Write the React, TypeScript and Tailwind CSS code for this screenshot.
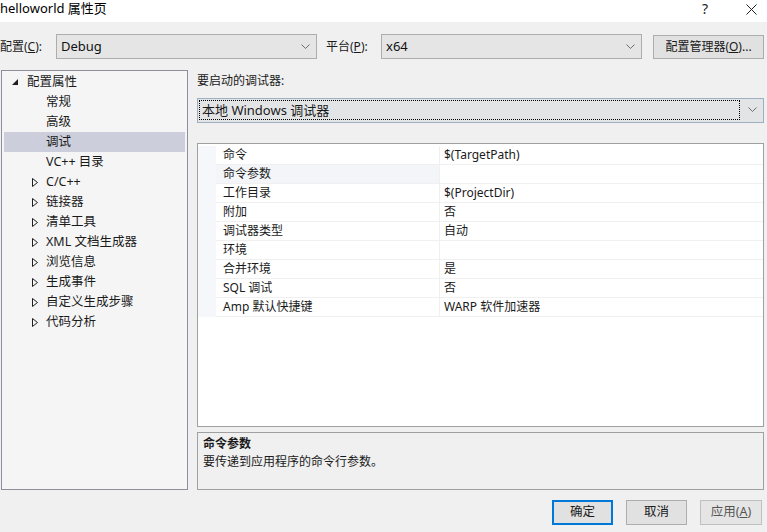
import { Fragment } from "react";

const font = "font-['Microsoft_YaHei_UI','Noto_Sans','Noto_Sans_CJK_SC',sans-serif]";

const treeItems: { label: string; level: 0 | 1; arrow?: "open" | "closed"; selected?: boolean }[] = [
  { label: "配置属性", level: 0, arrow: "open" },
  { label: "常规", level: 1 },
  { label: "高级", level: 1 },
  { label: "调试", level: 1, selected: true },
  { label: "VC++ 目录", level: 1 },
  { label: "C/C++", level: 1, arrow: "closed" },
  { label: "链接器", level: 1, arrow: "closed" },
  { label: "清单工具", level: 1, arrow: "closed" },
  { label: "XML 文档生成器", level: 1, arrow: "closed" },
  { label: "浏览信息", level: 1, arrow: "closed" },
  { label: "生成事件", level: 1, arrow: "closed" },
  { label: "自定义生成步骤", level: 1, arrow: "closed" },
  { label: "代码分析", level: 1, arrow: "closed" },
];

const props: [string, string][] = [
  ["命令", "$(TargetPath)"],
  ["命令参数", ""],
  ["工作目录", "$(ProjectDir)"],
  ["附加", "否"],
  ["调试器类型", "自动"],
  ["环境", ""],
  ["合并环境", "是"],
  ["SQL 调试", "否"],
  ["Amp 默认快捷键", "WARP 软件加速器"],
];

function Chevron({ className = "" }: { className?: string }) {
  return (
    <svg width="9" height="6" viewBox="0 0 9 6" className={className}>
      <polyline points="0.5,0.5 4.5,4.5 8.5,0.5" fill="none" stroke="#6d6d6d" strokeWidth="1" />
    </svg>
  );
}

function Combo({ value, className }: { value: string; className: string }) {
  return (
    <div className={`flex items-center justify-between border border-[#adadad] bg-[#e5e5e5] pl-[4px] pr-[6px] ${className}`}>
      <span className="text-[13px] text-[#111]">{value}</span>
      <Chevron />
    </div>
  );
}

export default function App() {
  return (
    <div className={`flex h-[532px] w-[767px] flex-col overflow-hidden bg-[#f0f0f0] text-[12px] text-[#1a1a1a] ${font}`}>
      {/* 标题栏 */}
      <div className="flex h-[22px] items-start justify-between bg-white pt-[1px]">
        <span className="text-[13px] leading-[14px] text-black">helloworld 属性页</span>
        <div className="flex items-center pt-[1px]">
          <span className="mr-[38px] text-[14px] leading-[14px] text-[#222]">?</span>
          <svg width="11" height="11" viewBox="0 0 11 11" className="mr-[10px]">
            <path d="M0.5 0.5 L10.5 10.5 M10.5 0.5 L0.5 10.5" stroke="#222" strokeWidth="1" />
          </svg>
        </div>
      </div>

      {/* 配置行 */}
      <div className="mt-[12px] flex h-[25px] items-center">
        <span className="w-[56px] text-[12px]">
          配置(<span className="underline">C</span>):
        </span>
        <Combo value="Debug" className="h-[25px] w-[261px]" />
        <span className="ml-[9px] w-[55px] text-[12px]">
          平台(<span className="underline">P</span>):
        </span>
        <Combo value="x64" className="h-[25px] w-[261px]" />
        <button className="ml-[11px] flex h-[24px] w-[111px] items-center justify-center border border-[#adadad] bg-[#e1e1e1] text-[12px]">
          配置管理器(<span className="underline">O</span>)...
        </button>
      </div>

      {/* 主体 */}
      <div className="mt-[11px] flex h-[420px]">
        {/* 左侧树 */}
        <div className="ml-[1px] w-[187px] border border-[#8e8f9c] bg-[#f5f5f5] pt-[1px]">
          {treeItems.map((it) => (
            <div
              key={it.label}
              className={`mx-[2px] flex h-[20px] items-center ${it.selected ? "bg-[#cccedb]" : ""}`}
            >
              <span className={`flex w-[8px] justify-center ${it.level === 0 ? "ml-[7px]" : "ml-[27px]"}`}>
                {it.arrow === "open" && (
                  <svg width="6" height="6" viewBox="0 0 6 6">
                    <polygon points="6,0 6,6 0,6" fill="#1e1e1e" />
                  </svg>
                )}
                {it.arrow === "closed" && (
                  <svg width="6" height="9" viewBox="0 0 6 9">
                    <polygon points="0.5,0.5 5.5,4.5 0.5,8.5" fill="none" stroke="#1e1e1e" strokeWidth="1" />
                  </svg>
                )}
              </span>
              <span className={`text-[12.5px] ${it.level === 0 ? "ml-[8px]" : "ml-[7px]"}`}>{it.label}</span>
            </div>
          ))}
        </div>

        {/* 右侧 */}
        <div className="ml-[9px] flex w-[567px] flex-col">
          <div className="mt-[2px] h-[18px] text-[12px]">要启动的调试器:</div>
          <div className="mt-[8px] flex h-[25px] items-center border border-[#9eafc2] bg-[#e3e4e6] pl-[1px] pr-[6px]">
            <div className="flex h-[20px] flex-1 items-center border border-dotted border-black pl-[2px] text-[13px]">
              本地 Windows 调试器
            </div>
            <Chevron className="ml-[8px]" />
          </div>

          {/* 属性网格 */}
          <div className="mt-[20px] h-[285px] border border-[#a0a0a0] bg-white pt-[2px]">
            <div className="grid grid-cols-[18px_224px_1fr]">
              {props.map(([name, value], i) => (
                <Fragment key={name}>
                  <div className="h-[19px] bg-[#f5f7fb]" />
                  <div
                    className={`flex h-[19px] items-center border-b border-r border-[#f0f0f0] pl-[7px] ${
                      i === 1 ? "bg-[#f3f5f9]" : ""
                    }`}
                  >
                    {name}
                  </div>
                  <div className="flex h-[19px] items-center border-b border-[#f0f0f0] pl-[4px]">{value}</div>
                </Fragment>
              ))}
            </div>
          </div>

          {/* 说明 */}
          <div className="mt-[5px] h-[58px] border border-[#a0a0a0] bg-[#f0f0f0] px-[5px] pt-[2px]">
            <div className="font-bold leading-[18px]">命令参数</div>
            <div className="leading-[18px]">要传递到应用程序的命令行参数。</div>
          </div>
        </div>
      </div>

      {/* 底部按钮 */}
      <div className="mt-[10px] flex h-[25px] justify-end pr-[5px]">
        <button className="flex h-[25px] w-[61px] items-center justify-center border-2 border-[#0078d7] bg-[#e1e1e1] text-[12.5px]">
          确定
        </button>
        <button className="ml-[13px] flex h-[25px] w-[61px] items-center justify-center border border-[#adadad] bg-[#e1e1e1] text-[12.5px]">
          取消
        </button>
        <button className="ml-[13px] flex h-[25px] w-[62px] items-center justify-center border border-[#bfbfbf] bg-[#e5e5e5] text-[12.5px] text-[#555]">
          应用(<span className="underline">A</span>)
        </button>
      </div>
    </div>
  );
}
